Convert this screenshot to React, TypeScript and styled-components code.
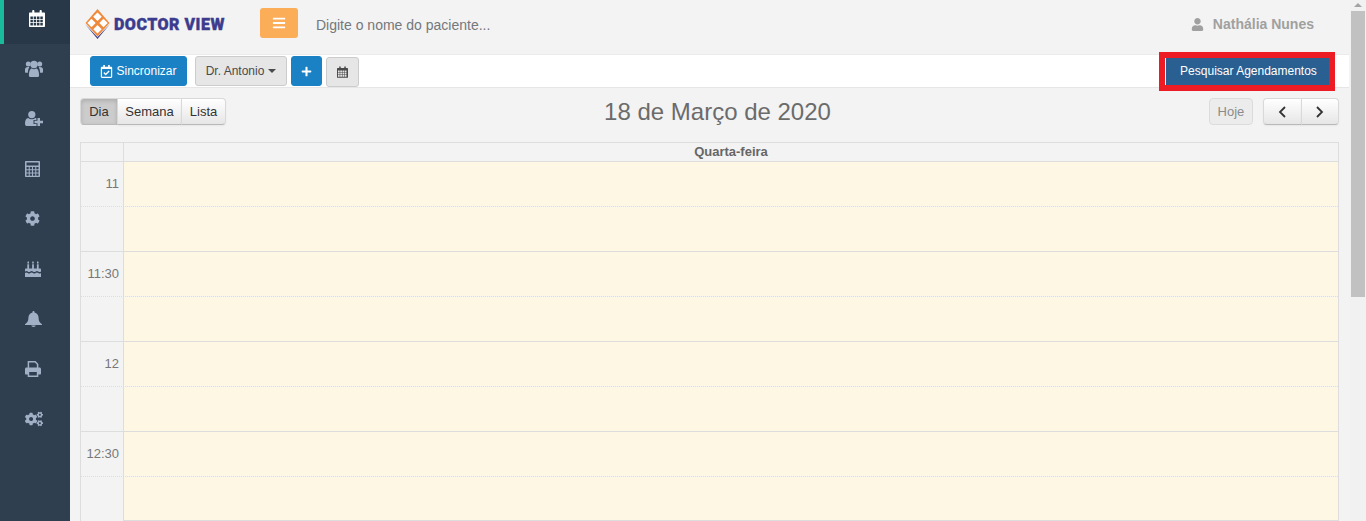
import * as React from "react";
import styled, { createGlobalStyle } from "styled-components";
import { FaBars, FaCog, FaCogs, FaPlus, FaRegCalendarCheck, FaUser } from "react-icons/fa";

const GlobalStyle = createGlobalStyle`
    html, body {
        margin: 0;
        height: 100%;
        overflow: hidden;
        background: #f3f3f3;
        font-family: "Liberation Sans", Arial, sans-serif;
    }
    * {
        box-sizing: border-box;
    }
`;

const Page = styled.div`
    display: flex;
    height: 521px;
    overflow: hidden;
`;

// Sidebar

const Sidebar = styled.nav`
    width: 70px;
    flex-shrink: 0;
    background: #2f3f50;
    display: flex;
    flex-direction: column;
`;

const SideItem = styled.div<{ $active?: boolean }>`
    height: ${(p) => (p.$active ? "44px" : "50px")};
    padding: ${(p) => (p.$active ? "0 0 7px 25px" : "0 0 1px 25px")};
    display: flex;
    align-items: center;
    background: ${(p) => (p.$active ? "#283848" : "transparent")};
    border-left: ${(p) => (p.$active ? "4px solid #1abb9c" : "none")};
    color: ${(p) => (p.$active ? "#ffffff" : "#a2b0c6")};
`;

// cells punched out of a solid block, used by the calendar and calculator icons
function cellHoles(x: number, y: number, cols: number, rows: number, cw: number, ch: number, gap: number): string {
    let d = "";
    for (let r = 0; r < rows; r++) {
        for (let c = 0; c < cols; c++) {
            const left = x + c * (cw + gap);
            const top = y + r * (ch + gap);
            d += `M${left} ${top}h${cw}v${ch}h-${cw}z`;
        }
    }
    return d;
}

function GridCalendar({ width, height }: { width: number; height: number }): JSX.Element {
    const body = "M1 2.500H3.200V1.200C3.200.5 3.700 0 4.300 0s1.100.5 1.100 1.200v1.300h5.200V1.200C10.600.5 11.100 0 11.700 0s1.100.5 1.100 1.200v1.300H15c.6 0 1 .4 1 1V16c0 .6-.4 1-1 1H1c-.6 0-1-.4-1-1V3.500c0-.6.4-1 1-1z";
    return (
        <svg width={width} height={height} viewBox="0 0 16 17" aria-hidden="true">
            <path fill="currentColor" fillRule="evenodd" d={body + cellHoles(1.4, 6.4, 4, 3, 2.500, 2.500, 0.8)} />
        </svg>
    );
}

function UsersIcon(): JSX.Element {
    return (
        <svg width="18" height="17" viewBox="0 0 18 17" aria-hidden="true">
            <g fill="currentColor">
                <circle cx="3.300" cy="4" r="2.500" />
                <circle cx="14.700" cy="4" r="2.500" />
                <path d="M0 9.500C0 8 1 7 3 7c.6 0 1 .1 1.300.3C3.300 9 2.900 10.500 2.900 12.800H1c-.6 0-1-.4-1-1z" />
                <path d="M18 9.500C18 8 17 7 15 7c-.6 0-1 .1-1.300.3 1 1.700 1.400 3.200 1.400 5.500H17c.6 0 1-.4 1-1z" />
                <circle cx="9" cy="4.500" r="3.700" />
                <path d="M3.900 15.500c0-4.800 1.400-7 3-7 .6.400 1.300.7 2.100.7s1.500-.3 2.100-.7c1.600 0 3 2.200 3 7 0 .9-.6 1.500-1.500 1.500H5.400c-.9 0-1.500-.6-1.500-1.500z" />
            </g>
        </svg>
    );
}

function UserPlusIcon(): JSX.Element {
    return (
        <svg width="18" height="15" viewBox="0 0 18 15" aria-hidden="true">
            <g fill="currentColor">
                <circle cx="6.800" cy="3.600" r="3.600" />
                <path d="M0 12.800C0 9.300 1 7.200 3.200 7c1 .8 2.200 1.200 3.600 1.200S9.400 7.800 10.400 7c.4 0 .7.100 1 .3V9H8.500v4h3v2H1.500C.6 15 0 14 0 12.800z" />
                <path d="M12.500 7H15v2.800h3v2.400h-3V15h-2.500v-2.800H9.500V9.800h3z" />
            </g>
        </svg>
    );
}

function CalculatorIcon(): JSX.Element {
    const frame = "M1 0h13c.6 0 1 .4 1 1v14c0 .6-.4 1-1 1H1c-.6 0-1-.4-1-1V1c0-.6.4-1 1-1z";
    return (
        <svg width="15" height="16" viewBox="0 0 15 16" aria-hidden="true">
            <path
                fill="currentColor"
                fillRule="evenodd"
                d={frame + "M1.500 1.500v3h12v-3z" + cellHoles(1.5, 6, 4, 3, 2.200, 2.200, 1.07)}
            />
        </svg>
    );
}

function CakeIcon(): JSX.Element {
    return (
        <svg width="16" height="16" viewBox="0 0 16 16" aria-hidden="true">
            <g fill="currentColor">
                <path d="M3.200 0c.6.800.9 1.300.9 1.800s-.4.900-.9.900-.9-.4-.9-.9.300-1 .9-1.800zM8 0c.6.800.9 1.300.9 1.800s-.4.900-.9.900-.9-.4-.9-.9.300-1 .9-1.800zM12.800 0c.6.800.9 1.300.9 1.800s-.4.900-.9.900-.9-.4-.9-.9.300-1 .9-1.800z" />
                <path d="M2.300 3.200h1.800V8H2.300zM7.100 3.200h1.800V8H7.100zM11.900 3.200h1.800V8h-1.800z" />
                <path d="M1 7.500h14c.6 0 1 .4 1 1v2c-1 .8-1.800.8-2.700 0-.9-.8-1.800-.8-2.600 0-.9.8-1.800.8-2.700 0-.9-.8-1.800-.8-2.700 0-.9.8-1.800.8-2.600 0C2.800 9.700 1 9.700 0 10.500v-2c0-.6.4-1 1-1z" />
                <path d="M0 12c1-.7 1.800-.7 2.700 0 .9.800 1.800.8 2.600 0 .9-.8 1.800-.8 2.700 0 .9.800 1.800.8 2.700 0 .8-.8 1.700-.8 2.600 0 .9.700 1.700.7 2.700 0v4H0z" />
            </g>
        </svg>
    );
}

function BellIcon(): JSX.Element {
    return (
        <svg width="17" height="16" viewBox="0 0 17 16" aria-hidden="true">
            <g fill="currentColor">
                <path d="M8.500 0c.6 0 1 .4 1 1v.6c2.700.5 4.100 2.700 4.100 5.400 0 2.900 1.100 4.700 3.400 6.300v.7H0v-.7C2.300 11.700 3.400 9.900 3.400 7c0-2.700 1.400-4.900 4.100-5.400V1c0-.6.4-1 1-1z" />
                <path d="M6.300 14.600h4.400A2.200 1.400 0 0 1 6.300 14.600z" />
            </g>
        </svg>
    );
}

function PrintIcon(): JSX.Element {
    return (
        <svg width="16" height="16" viewBox="0 0 16 16" aria-hidden="true">
            <path d="M3.400 7V.8h6.800l2.400 2.400V7" fill="none" stroke="currentColor" strokeWidth="1.500" />
            <path
                fill="currentColor"
                fillRule="evenodd"
                d="M1.500 6.500h13c.8 0 1.500.7 1.500 1.500v4.500c0 .6-.4 1-1 1h-1.700V16H2.700v-2.500H1c-.6 0-1-.4-1-1V8c0-.8.7-1.500 1.500-1.500zM4.200 11v3.500h7.600V11z"
            />
        </svg>
    );
}

// Header

const Main = styled.div`
    flex: 1;
    min-width: 0;
    display: flex;
    flex-direction: column;
`;

const Header = styled.header`
    height: 54px;
    flex-shrink: 0;
    display: flex;
    align-items: center;
    padding: 0 36px 0 15px;
`;

const Logo = styled.div`
    display: flex;
    align-items: center;
    gap: 4px;
    width: 175px;
    margin-top: -6px;
`;

const LogoText = styled.span`
    font-family: Roboto, "DejaVu Sans", sans-serif;
    font-weight: 900;
    font-size: 16px;
    letter-spacing: 0.5px;
    white-space: nowrap;
    color: #3c3c8e;
    -webkit-text-stroke: 0.4px #3c3c8e;
`;

const MenuButton = styled.button`
    width: 38px;
    height: 30px;
    margin-top: -8px;
    border: none;
    border-radius: 3px;
    background: #fbad58;
    color: #fff;
    display: flex;
    align-items: center;
    justify-content: center;
    padding: 0;
`;

const SearchHint = styled.div`
    margin-left: 18px;
    margin-top: -4px;
    flex: 1;
    font-size: 14px;
    color: #73787c;
`;

const UserName = styled.div`
    display: flex;
    align-items: center;
    gap: 9px;
    margin-top: -6px;
    font-size: 14px;
    font-weight: 700;
    color: #a0a0a0;
`;

// Toolbar

const Toolbar = styled.div`
    height: 34px;
    flex-shrink: 0;
    background: #fff;
    border-top: 1px solid #ebebeb;
    border-bottom: 1px solid #e6e6e6;
    margin-right: 1px;
    display: flex;
    align-items: center;
    gap: 4px;
    padding: 0 20px;
`;

const ToolButton = styled.button<{ $variant: "primary" | "neutral" | "light"; $width: number }>`
    width: ${(p) => p.$width}px;
    height: 30px;
    margin-top: ${(p) => (p.$variant === "light" ? "2px" : "0")};
    margin-left: ${(p) => (p.$variant === "neutral" ? "4px" : "0")};
    padding: 0;
    display: inline-flex;
    align-items: center;
    justify-content: center;
    gap: 3px;
    font-family: inherit;
    font-size: 12px;
    border-radius: 3px;
    color: ${(p) => (p.$variant === "primary" ? "#fff" : "#4a4a4a")};
    background: ${(p) => (p.$variant === "primary" ? "#1a82c4" : "#e6e6e6")};
    border: 1px solid ${(p) => (p.$variant === "primary" ? "#1a82c4" : "#cccccc")};
`;

const Caret = styled.span`
    width: 0;
    height: 0;
    border-left: 4px solid transparent;
    border-right: 4px solid transparent;
    border-top: 4px solid #4a4a4a;
    margin-left: 1px;
`;

const SearchButton = styled.button`
    margin-left: auto;
    width: 164px;
    height: 27px;
    padding: 0 0 0 2px;
    font-family: inherit;
    font-size: 12px;
    color: #fff;
    background: #2a6091;
    border: none;
    border-left: 1px solid #fff;
    outline: 6px solid #ed1c24;
`;

// Calendar

const Calendar = styled.section`
    flex: 1;
    min-height: 0;
    padding: 10px 11px 0 10px;
    display: flex;
    flex-direction: column;
`;

const CalendarBar = styled.div`
    display: flex;
    align-items: center;
    justify-content: space-between;
    height: 27px;
    flex-shrink: 0;
    margin-bottom: 17px;
`;

const BtnGroup = styled.div`
    display: flex;
`;

const GroupButton = styled.button<{ $width: number; $on?: boolean; $off?: boolean }>`
    width: ${(p) => p.$width}px;
    height: 27px;
    padding: 0;
    margin-left: -1px;
    display: flex;
    align-items: center;
    justify-content: center;
    font-family: inherit;
    font-size: 13px;
    color: ${(p) => (p.$off ? "#8b8b8b" : "#333")};
    border: 1px solid ${(p) => (p.$off ? "#dcdcdc" : "#d9d9d9")};
    border-bottom-color: ${(p) => (p.$off ? "#dcdcdc" : "#b8b8b8")};
    background: ${(p) =>
        p.$on ? "#cccccc" : p.$off ? "#ececec" : "linear-gradient(#ffffff, #e6e6e6)"};
    box-shadow: ${(p) =>
        p.$on
            ? "inset 0 2px 4px rgba(0,0,0,.15)"
            : p.$off
            ? "none"
            : "inset 0 1px 0 rgba(255,255,255,.2), 0 1px 2px rgba(0,0,0,.05)"};
    &:first-child {
        margin-left: 0;
        border-radius: 4px 0 0 4px;
    }
    &:last-child {
        border-radius: 0 4px 4px 0;
    }
    &:only-child {
        border-radius: 4px;
    }
`;

const Title = styled.h2`
    margin: 0;
    font-size: 24px;
    font-weight: 400;
    color: #6b6b6b;
    white-space: nowrap;
`;

const BarRight = styled.div`
    display: flex;
    gap: 10px;
`;

const Grid = styled.div`
    flex: 1;
    min-height: 0;
    overflow: hidden;
    border-left: 1px solid #ddd;
    border-right: 1px solid #ddd;
    border-top: 1px solid #ddd;
`;

const HeadRow = styled.div`
    display: grid;
    grid-template-columns: 42px 1fr;
    height: 19px;
    border-bottom: 1px solid #ddd;
`;

const DayName = styled.div`
    border-left: 1px solid #ddd;
    text-align: center;
    font-size: 13px;
    font-weight: 700;
    line-height: 18px;
    color: #666;
`;

const SlotRow = styled.div<{ $kind: "dotted" | "solid" | "end" }>`
    display: grid;
    grid-template-columns: 42px 1fr;
    height: ${(p) => (p.$kind === "end" ? "44px" : "45px")};
    border-bottom: ${(p) => (p.$kind === "end" ? "none" : `1px ${p.$kind} #ddd`)};
`;

const TimeCell = styled.div`
    font-size: 13px;
    color: #777;
    text-align: right;
    padding: 14px 4px 0 0;
`;

const DayCell = styled.div<{ $end?: boolean }>`
    background: #fef7e3;
    border-left: 1px solid #ddd;
    border-bottom: ${(p) => (p.$end ? "1px solid #ddd" : "none")};
`;

// Scrollbar

const ScrollTrack = styled.div`
    width: 16px;
    flex-shrink: 0;
    background: #f1f1f1;
    display: flex;
    flex-direction: column;
    align-items: center;
`;

const ScrollArrow = styled.div`
    width: 0;
    height: 0;
    margin-top: 3px;
    margin-bottom: 4px;
    border-left: 4px solid transparent;
    border-right: 4px solid transparent;
    border-bottom: 4px solid #a3a3a3;
`;

const ScrollThumb = styled.div`
    width: 14px;
    height: 286px;
    background: #c1c1c1;
`;

const slots: { label: string; kind: "dotted" | "solid" | "end" }[] = [
    { label: "11", kind: "dotted" },
    { label: "", kind: "solid" },
    { label: "11:30", kind: "dotted" },
    { label: "", kind: "solid" },
    { label: "12", kind: "dotted" },
    { label: "", kind: "solid" },
    { label: "12:30", kind: "dotted" },
    { label: "", kind: "end" },
];

function LogoMark(): JSX.Element {
    return (
        <svg width="25" height="30" viewBox="0 0 25 30" aria-hidden="true">
            <path d="M0 15 12.500 30 25 15 12.500 28z" fill="#45458f" />
            <path d="M12.500 0 24.500 14 12.500 27.500.5 14z" fill="#ef8a3c" />
            <path
                d="M12.500 3.500l4.300 4.300-4.300 4.300-4.300-4.300zM6.500 9.800l4.200 4.200-4.200 4.200L2.300 14zM18.500 9.800l4.200 4.200-4.200 4.200-4.200-4.200zM12.500 16l4.200 4.200-4.200 4.200-4.200-4.200z"
                fill="#ffffff"
            />
        </svg>
    );
}

function Chevron({ dir }: { dir: "left" | "right" }): JSX.Element {
    return (
        <svg width="9" height="12" viewBox="0 0 9 12" aria-hidden="true">
            <path
                d={dir === "left" ? "M7 1 2 6l5 5" : "M2 1l5 5-5 5"}
                fill="none"
                stroke="#333"
                strokeWidth="1.800"
            />
        </svg>
    );
}

export default function App(): JSX.Element {
    return (
        <Page>
            <GlobalStyle />
            <Sidebar>
                <SideItem $active>
                    <GridCalendar width={16} height={17} />
                </SideItem>
                <SideItem>
                    <UsersIcon />
                </SideItem>
                <SideItem>
                    <UserPlusIcon />
                </SideItem>
                <SideItem>
                    <CalculatorIcon />
                </SideItem>
                <SideItem>
                    <FaCog size={15} />
                </SideItem>
                <SideItem>
                    <CakeIcon />
                </SideItem>
                <SideItem>
                    <BellIcon />
                </SideItem>
                <SideItem>
                    <PrintIcon />
                </SideItem>
                <SideItem>
                    <FaCogs size={18} />
                </SideItem>
            </Sidebar>
            <Main>
                <Header>
                    <Logo>
                        <LogoMark />
                        <LogoText>DOCTOR VIEW</LogoText>
                    </Logo>
                    <MenuButton>
                        <FaBars size={14} />
                    </MenuButton>
                    <SearchHint>Digite o nome do paciente...</SearchHint>
                    <UserName>
                        <FaUser size={13} />
                        Nathália Nunes
                    </UserName>
                </Header>
                <Toolbar>
                    <ToolButton $variant="primary" $width={97}>
                        <FaRegCalendarCheck size={13} />
                        Sincronizar
                    </ToolButton>
                    <ToolButton $variant="neutral" $width={92}>
                        Dr. Antonio
                        <Caret />
                    </ToolButton>
                    <ToolButton $variant="primary" $width={31}>
                        <FaPlus size={11} />
                    </ToolButton>
                    <ToolButton $variant="light" $width={33}>
                        <GridCalendar width={11} height={12} />
                    </ToolButton>
                    <SearchButton>Pesquisar Agendamentos</SearchButton>
                </Toolbar>
                <Calendar>
                    <CalendarBar>
                        <BtnGroup>
                            <GroupButton $width={38} $on>
                                Dia
                            </GroupButton>
                            <GroupButton $width={65}>Semana</GroupButton>
                            <GroupButton $width={45}>Lista</GroupButton>
                        </BtnGroup>
                        <Title>18 de Março de 2020</Title>
                        <BarRight>
                            <BtnGroup>
                                <GroupButton $width={44} $off>
                                    Hoje
                                </GroupButton>
                            </BtnGroup>
                            <BtnGroup>
                                <GroupButton $width={39}>
                                    <Chevron dir="left" />
                                </GroupButton>
                                <GroupButton $width={38}>
                                    <Chevron dir="right" />
                                </GroupButton>
                            </BtnGroup>
                        </BarRight>
                    </CalendarBar>
                    <Grid>
                        <HeadRow>
                            <div />
                            <DayName>Quarta-feira</DayName>
                        </HeadRow>
                        {slots.map((slot, index) => (
                            <SlotRow key={index} $kind={slot.kind}>
                                <TimeCell>{slot.label}</TimeCell>
                                <DayCell $end={slot.kind === "end"} />
                            </SlotRow>
                        ))}
                    </Grid>
                </Calendar>
            </Main>
            <ScrollTrack>
                <ScrollArrow />
                <ScrollThumb />
            </ScrollTrack>
        </Page>
    );
}
